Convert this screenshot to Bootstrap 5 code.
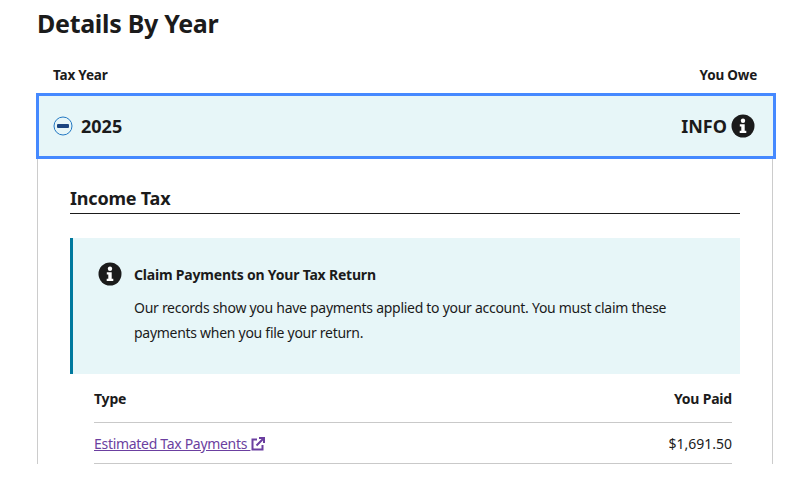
<!DOCTYPE html>
<html>

<head>
	<meta name="viewport" content="width=device-width, initial-scale=1">
	<title>Details By Year</title>
	<link href="https://cdn.jsdelivr.net/npm/bootstrap@5.3.3/dist/css/bootstrap.min.css" rel="stylesheet">
	<style>
		body {
			font-family: "Noto Sans", "Liberation Sans", sans-serif;
			color: #1b1b1b;
			height: 486px;
			overflow: hidden;
		}

		.page-wrap {
			padding: 0 25px 0 37px;
		}

		.page-title {
			font-size: 25px;
			font-weight: 700;
			line-height: 32px;
			margin: 7px 0 0;
			letter-spacing: -0.3px;
		}

		.year-head {
			font-size: 13.5px;
			font-weight: 700;
			line-height: 18px;
			padding: 27px 19px 9px 16px;
			letter-spacing: -0.2px;
		}

		.year-toggle {
			width: 740px;
			margin-left: -1px;
			height: 66px;
			background: #e7f6f8;
			border: 3px solid #4589ff;
			padding: 0 18px 0 14px;
			font-weight: 700;
			font-size: 18px;
		}

		.year-panel {
			width: 736px;
			border-left: 1px solid #ccc;
			border-right: 1px solid #ccc;
			padding: 27px 32px 0;
		}

		.tax-title {
			font-size: 18px;
			font-weight: 700;
			line-height: 24px;
			padding-bottom: 3px;
			border-bottom: 1px solid #1b1b1b;
			margin: 0 0 24px;
			letter-spacing: -0.2px;
		}

		.claim-box {
			background: #e7f6f8;
			border-left: 3px solid #00799e;
			padding: 24px 24px 22px 25px;
			height: 136px;
		}

		.claim-title {
			font-size: 14px;
			font-weight: 700;
			line-height: 26px;
			letter-spacing: -0.2px;
		}

		.claim-text {
			font-size: 14px;
			line-height: 25px;
			margin: 7px 0 0;
			letter-spacing: -0.28px;
		}

		.pay-table {
			margin: 14px 8px 0 24px;
			width: auto;
			font-size: 14px;
		}

		.pay-row {
			border-bottom: 1px solid #c9c9c9;
			height: 41px;
		}

		.pay-row.top {
			height: 35px;
			font-weight: 700;
			letter-spacing: -0.2px;
		}

		.pay-link {
			color: #6b3fa0;
			letter-spacing: -0.3px;
		}

		.pay-link svg {
			margin-left: 1px;
			vertical-align: -2px;
		}
	</style>
</head>

<body>
	<div class="page-wrap">
		<h1 class="page-title">Details By Year</h1>

		<div class="year-head d-flex justify-content-between">
			<span>Tax Year</span>
			<span>You Owe</span>
		</div>

		<div class="year-toggle d-flex align-items-center justify-content-between">
			<span class="d-flex align-items-center gap-2">
				<svg width="20" height="20" viewBox="0 0 20 20">
					<circle cx="10" cy="10" r="9" fill="none" stroke="#2378c3" stroke-width="1"/>
					<rect x="4" y="8" width="12" height="4" rx="1" fill="#1a4480"/>
				</svg>
				2025
			</span>
			<span class="d-flex align-items-center gap-1">
				INFO
				<svg width="24" height="24" viewBox="0 0 24 24">
					<circle cx="12" cy="12" r="11.5" fill="#1b1b1b"/>
					<circle cx="12" cy="6.8" r="2.2" fill="#fff"/>
					<path d="M8.8 10.2h4.9v6.6h1.6v2.2H8.7v-2.2h1.6v-4.4H8.8z" fill="#fff"/>
				</svg>
			</span>
		</div>

		<div class="year-panel">
			<h2 class="tax-title">Income Tax</h2>

			<div class="claim-box d-flex gap-2">
				<svg class="flex-shrink-0 me-1" width="24" height="24" viewBox="0 0 24 24">
					<circle cx="12" cy="12" r="11.5" fill="#1b1b1b"/>
					<circle cx="12" cy="6.8" r="2.2" fill="#fff"/>
					<path d="M8.8 10.2h4.9v6.6h1.6v2.2H8.7v-2.2h1.6v-4.4H8.8z" fill="#fff"/>
				</svg>
				<div>
					<div class="claim-title">Claim Payments on Your Tax Return</div>
					<p class="claim-text">Our records show you have payments applied to your account. You must claim these payments when you file your return.</p>
				</div>
			</div>

			<div class="pay-table">
				<div class="pay-row top d-flex justify-content-between">
					<span>Type</span>
					<span>You Paid</span>
				</div>
				<div class="pay-row d-flex justify-content-between align-items-center">
					<a href="#" class="pay-link">Estimated Tax Payments
						<svg width="14" height="14" viewBox="0 0 14 14" fill="none" stroke="#6b3fa0" stroke-width="2">
							<path d="M6 2.5H1.5v10h10V8"/>
							<path d="M5.5 8.5 12.5 1.5M8 1h5v5"/>
						</svg>
					</a>
					<span>$1,691.50</span>
				</div>
			</div>
		</div>
	</div>
	<script src="https://cdn.jsdelivr.net/npm/bootstrap@5.3.3/dist/js/bootstrap.bundle.min.js"></script>
</body>

</html>
